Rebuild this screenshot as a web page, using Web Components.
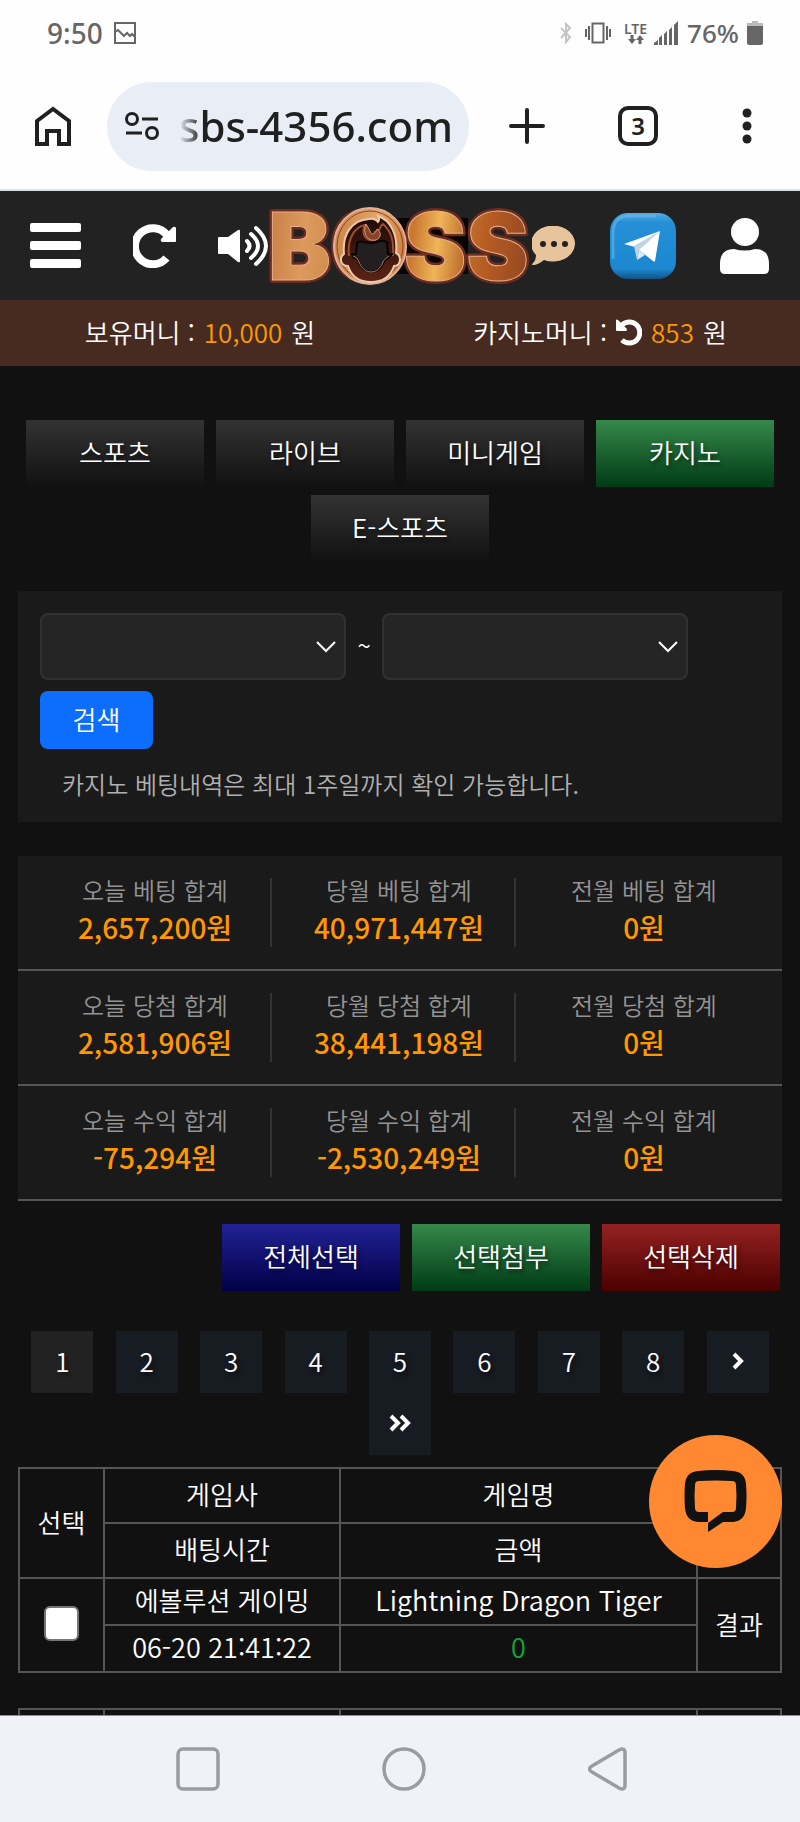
<!DOCTYPE html>
<html lang="ko">
<head>
<meta charset="utf-8">
<meta name="viewport" content="width=device-width, initial-scale=1">
<title>BOSS</title>
<style>
html,body{margin:0;height:100%}
body{background:#111;color:#fff;font-family:"Noto Sans CJK KR","Noto Sans",sans-serif;font-size:26px;line-height:36px;font-weight:350}
</style>
</head>
<body>
<phone-shell>
  <status-bar slot="top"></status-bar>
  <browser-bar slot="top"></browser-bar>
  <site-header></site-header>
  <money-bar></money-bar>
  <game-tabs>
    <action-button>스포츠</action-button>
    <action-button>라이브</action-button>
    <action-button>미니게임</action-button>
    <action-button tone="green">카지노</action-button>
    <action-button>E-스포츠</action-button>
  </game-tabs>
  <search-panel>카지노 베팅내역은 최대 1주일까지 확인 가능합니다.</search-panel>
  <bet-stats></bet-stats>
  <action-row>
    <action-button tone="blue">전체선택</action-button>
    <action-button tone="green">선택첨부</action-button>
    <action-button tone="red">선택삭제</action-button>
  </action-row>
  <page-list></page-list>
  <bet-table></bet-table>
  <bet-table blank></bet-table>
  <chat-fab slot="overlay"></chat-fab>
  <nav-bar slot="bottom"></nav-bar>
</phone-shell>
<script>
const define = (name, html) => customElements.define(name, class extends HTMLElement {
  constructor() {
    super();
    const t = document.createElement('template');
    t.innerHTML = '<style>:host,*{box-sizing:border-box}button{font:inherit;color:inherit;background:none;border:0;padding:0;margin:0;display:block;cursor:pointer}svg{display:block}</style>' +
      (typeof html === 'function' ? html(this) : html);
    this.attachShadow({mode: 'open'}).append(t.content.cloneNode(true));
  }
});

define('phone-shell', `
<style>
:host{display:flex;flex-direction:column;height:100vh;overflow:hidden}
.view{flex:1;min-height:0;position:relative}
main{height:100%;overflow-y:auto;scrollbar-width:none}
</style>
<slot name="top"></slot>
<div class="view"><main><slot></slot></main><slot name="overlay"></slot></div>
<slot name="bottom"></slot>`);

define('status-bar', `
<style>
:host{display:flex;align-items:center;justify-content:space-between;height:66px;padding:0 37px 0 47px;background:#fefefe;color:#666;font-family:"Noto Sans",sans-serif}
.g{display:flex;align-items:center}
.time{font-size:28px;font-weight:500;margin-right:11px}
.pct{font-size:26px;font-weight:500;margin:0 8px}
.lte{display:flex;flex-direction:column;align-items:center;font-size:14px;line-height:13px;font-weight:600;margin:0 7px 0 13px}
.bt{margin-right:13px}
</style>
<div class="g"><span class="time">9:50</span>
<svg width="22" height="22" viewBox="0 0 22 22" fill="none" stroke="#666" stroke-width="2"><path d="M1 1h20v20H1zM1 10l3-2 6 6 3-3 3 3 2-2 3 3"/></svg></div>
<div class="g">
<svg class="bt" width="12" height="22" viewBox="0 0 12 22" fill="none" stroke="#c4c4c4" stroke-width="2"><path d="M1 6l9 9-4 5V2l4 4-9 10"/></svg>
<svg width="26" height="22" viewBox="0 0 26 22" fill="none" stroke="#666" stroke-width="2"><path d="M7.500 1.500h11v19h-11zM4 4v14M1 7v8M22 4v14M25 7v8"/></svg>
<div class="lte">LTE<svg width="16" height="9" viewBox="0 0 16 9" fill="#666"><path d="M2.500 0h3v4h2.500L4 9 0 4h2.500zM10.500 9h3V5H16l-4-5-4 5h2.500z"/></svg></div>
<svg width="25" height="24" viewBox="0 0 25 24" fill="#666"><path d="M0 24v-2l4-3v5zM5 24v-7l3-3v10zM10 24V13l3-3v14zM15 24V9l3-3v18zM20 24V4l4-4v24z"/></svg>
<span class="pct">76%</span>
<svg width="16" height="24" viewBox="0 0 16 24"><path d="M5 0h6v2h5v5H0V2h5z" fill="#bbb"/><path d="M0 5h16v17q0 2-2 2H2q-2 0-2-2z" fill="#666"/></svg>
</div>`);

define('browser-bar', `
<style>
:host{display:flex;align-items:center;height:125px;padding:0 48px 3px 35px;background:#fefefe;border-bottom:2px solid #d9e2ea;color:#202020;font-family:"Noto Sans",sans-serif}
.url{flex:1;min-width:0;display:flex;align-items:center;gap:20px;height:89px;padding:0 12px 0 18px;margin:0 40px 0 36px;border-radius:45px;background:#e8edf6}
.url svg{flex:none}
input{flex:1;min-width:0;width:100%;border:0;padding:0;background:none;color:inherit;font:500 42px/56px "Noto Sans",sans-serif;outline:0;mask-image:linear-gradient(90deg,transparent,#000 22px)}
.tabs{width:40px;height:40px;border:4px solid #202020;border-radius:10px;font-size:24px;line-height:32px;font-weight:600;text-align:center;margin:0 84px 0 73px}
</style>
<button aria-label="home"><svg width="36" height="40" viewBox="0 0 36 40" fill="none" stroke="#202020" stroke-width="4"><path d="M2 15L18 3l16 12v23H24V25H12v13H2z"/></svg></button>
<div class="url">
<svg width="34" height="28" viewBox="0 0 34 28" fill="none" stroke="#202020" stroke-width="3"><circle cx="7" cy="7" r="5.500"/><circle cx="27" cy="21" r="5.500"/><path d="M17 7h16M1 21h16"/></svg>
<input aria-label="address" value="sbs-4356.com" readonly></div>
<button aria-label="new tab"><svg width="36" height="36" viewBox="0 0 36 36" stroke="#202020" stroke-width="4" stroke-linecap="round"><path d="M18 2v32M2 18h32"/></svg></button>
<button class="tabs">3</button>
<button aria-label="menu"><svg width="10" height="36" viewBox="0 0 10 36" fill="#202020"><circle cx="5" cy="5" r="4.500"/><circle cx="5" cy="18" r="4.500"/><circle cx="5" cy="31" r="4.500"/></svg></button>`);

define('boss-logo', `
<style>:host{display:block}svg{overflow:visible}text{font:900 94px "Inter",sans-serif}</style>
<svg width="260" height="80" viewBox="0 0 260 80" role="img" aria-label="BOSS">
<defs>
<linearGradient id="c" gradientUnits="userSpaceOnUse" x1="0" y1="0" x2="260" y2="30">
<stop offset="0" stop-color="#c67d45"/><stop offset=".15" stop-color="#dc9a5c"/><stop offset=".28" stop-color="#d08b4e"/><stop offset=".42" stop-color="#e2a668"/><stop offset=".56" stop-color="#c9762f"/><stop offset=".66" stop-color="#efb656"/><stop offset=".76" stop-color="#c0702f"/><stop offset=".86" stop-color="#b45a22"/><stop offset="1" stop-color="#974a22"/>
</linearGradient>
<linearGradient id="d" x1="0" y1="0" x2="0" y2="1"><stop offset="0" stop-color="#1c0906"/><stop offset="1" stop-color="#5c2416"/></linearGradient>
</defs>
<path d="M120 12h80v56h-80z" fill="#080505"/>
<text x="0" y="74" fill="url(#c)" stroke="#6d2c1c" stroke-width="6" stroke-linejoin="round" paint-order="stroke">BOSS</text>
<text x="0" y="74" fill="none" stroke="#e3ae8c" stroke-width="1" aria-hidden="true">BOSS</text>
<g transform="translate(2 0)">
<ellipse cx="100" cy="40" rx="36" ry="38" fill="url(#c)" stroke="#e0b09a" stroke-width="2"/>
<ellipse cx="100" cy="40" rx="33" ry="35" fill="none" stroke="#8c4526" stroke-width="1"/>
<path d="M74 48c-2-20 8-34 25-35 4-1 7 0 9 3 2-2 1-4 0-6 12 4 20 18 18 37 6 3 5 13-2 13-4 12-13 16-23 16s-19-4-23-16c-8 0-9-9-4-12z" fill="url(#d)" stroke="#efc7ab" stroke-width="2"/>
<path d="M79 50c-2-16 5-29 16-31-4 8 0 16 8 15 6-1 5-7 1-8 8-1 5-6 9-8 9 8 11 18 10 32" fill="none" stroke="#99502e" stroke-width="2"/>
<path d="M96 18c-4 10 2 18 10 16 5-2 6-8 1-11-2 6-6 6-7 2z" fill="#8a432a" stroke="#d29a78" stroke-width="1"/>
<path d="M87 37c4-4 7 0 14 0s10-5 16-1l1 12 4 0c-2 4-5 5-7 6-4 9-9 12-14 12s-10-3-13-12c-3-1-5-2-6-6h4z" fill="#211f1f" stroke="#090404" stroke-width="2"/>
<path d="M83 50c3 1 5 3 6 6 3 7 7 10 12 10s9-3 12-10c2-4 4-4 6-6" fill="none" stroke="#be8260" stroke-width="1"/>
</g>
</svg>`);

define('site-header', `
<style>
:host{display:flex;align-items:center;justify-content:space-between;height:109px;padding:0 31px 0 30px;background:#222}
.side{flex:1;display:flex;align-items:center;justify-content:space-between}
.pair{display:flex;align-items:center}
.l .pair{gap:42px}.r .pair{gap:33px}
.r{padding-left:4px}
</style>
<div class="side l"><button aria-label="menu"><svg width="51" height="45" viewBox="0 0 51 45" fill="#fff"><rect width="51" height="9" rx="2"/><rect y="18" width="51" height="9" rx="2"/><rect y="36" width="51" height="9" rx="2"/></svg></button>
<div class="pair"><button aria-label="refresh"><svg width="43" height="44" viewBox="0 0 43 44"><path d="M34 11A18 18 0 1 0 33.500 34" fill="none" stroke="#fff" stroke-width="8"/><path d="M43 4v13q0 1-1 1H29q-2-1-1-3L40 3q2-1 3 1z" fill="#fff"/></svg></button>
<button aria-label="sound"><svg width="50" height="42" viewBox="0 0 50 42" fill="none" stroke="#fff" stroke-width="4" stroke-linecap="round"><path d="M1 12h9L20 5q2-1 2 1v30q0 2-2 1L10 29H1q-1 0-1-1V13q0-1 1-1z" fill="#fff" stroke="none"/><path d="M29 16q5 5 0 10M33 9q14 12 0 24M38 3q20 18 0 36"/></svg></button></div></div>
<boss-logo></boss-logo>
<div class="side r"><div class="pair"><button aria-label="messages"><svg width="45" height="40" viewBox="0 0 45 40"><path d="M1 39q-2 0 0-2 3-3 3-8a22 18 0 1 1 8 5Q6 39 1 39z" fill="#e8c49c"/><g fill="#222"><circle cx="11" cy="18" r="3"/><circle cx="22" cy="18" r="3"/><circle cx="33" cy="18" r="3"/></g></svg></button>
<button aria-label="telegram"><svg width="66" height="66" viewBox="0 0 66 66"><defs><linearGradient id="t" x1="0" y1="0" x2="0" y2="1"><stop offset="0" stop-color="#54abe2"/><stop offset=".14" stop-color="#2590d6"/><stop offset=".85" stop-color="#1b87d0"/><stop offset="1" stop-color="#125384"/></linearGradient></defs><rect width="66" height="66" rx="18" fill="url(#t)"/><path d="M3 46V20Q3 3 20 3h26" fill="none" stroke="#74bdea" stroke-width="3" opacity=".5"/><path d="M14 31l36-13-23 21-2-5z" fill="#fff"/><path d="M24 33l26-15-21 19-2 10z" fill="#bed3e5"/><path d="M29 37l21-19-5 30q-1 1-2 0z" fill="#fff"/><path d="M27 47l2-10 6 5z" fill="#dce8f2"/></svg></button></div>
<button aria-label="account"><svg width="49" height="56" viewBox="0 0 49 56" fill="#fff"><circle cx="25" cy="14" r="14"/><path d="M0 51V46q0-15 14-15 11 3 21 0 14 0 14 15v5q0 5-5 5H5q-5 0-5-5z"/></svg></button></div>`);

define('money-bar', `
<style>
:host{display:grid;grid-template-columns:1fr 1fr;height:66px;padding-bottom:2px;background:#472b20}
div{display:flex;align-items:center;justify-content:center;gap:9px}
b{font-weight:inherit;color:#ff9800}
</style>
<div><span>보유머니 :</span><b>10,000</b><span>원</span></div>
<div><span>카지노머니 :</span><button aria-label="reload"><svg width="26" height="27" viewBox="0 0 26 27"><path d="M6 6A10.500 10.500 0 1 1 6 21" fill="none" stroke="#fff" stroke-width="5"/><path d="M0 1v10q0 1 1 1h9q2-1 0-3L2 1Q0 0 0 1z" fill="#fff"/></svg></button><b>853</b><span>원</span></div>`);

define('action-button', `
<style>
:host{display:block;width:178px;--a:#333;--b:#111}
:host([tone=green]){--a:#35884a;--b:#003b15}
:host([tone=blue]){--a:#222294;--b:#000048}
:host([tone=red]){--a:#942222;--b:#4c0000}
button{width:100%;height:67px;padding-bottom:4px;background:linear-gradient(var(--a),var(--b));text-align:center;text-shadow:2px 3px 4px #0008}
</style><button><slot></slot></button>`);

define('game-tabs', `<style>:host{display:flex;flex-wrap:wrap;justify-content:center;gap:8px 12px;padding:54px 18px 0}</style><slot></slot>`);
define('action-row', `<style>:host{display:flex;justify-content:flex-end;gap:12px;padding:23px 20px 0 18px}</style><slot></slot>`);

define('search-panel', `
<style>
:host{display:block;margin:29px 18px 0;padding:22px 22px 20px;background:#1a1a1a}
.row{display:flex;align-items:center}
.row span{width:36px;text-align:center;font-size:24px;margin-top:-4px}
select{appearance:none;width:306px;height:67px;border:2px solid #313131;border-radius:8px;color:#fff;font:inherit;
background:#252525 url('data:image/svg+xml,<svg xmlns="http://www.w3.org/2000/svg" width="20" height="12" fill="none" stroke="white" stroke-width="2"><path d="M1 1l9 9 9-9"/></svg>') no-repeat right 8px center}
button{width:113px;height:58px;margin-top:11px;padding-bottom:2px;border-radius:8px;background:#0d6efd}
p{margin:17px 0 0 22px;font-size:24px;line-height:36px;color:#b0b0b0}
</style>
<div class="row"><select aria-label="시작일"></select><span>~</span><select aria-label="종료일"></select></div>
<button>검색</button>
<p><slot></slot></p>`);

const stats = [['베팅', '2,657,200', '40,971,447', '0'], ['당첨', '2,581,906', '38,441,198', '0'], ['수익', '-75,294', '-2,530,249', '0']];
define('bet-stats', `
<style>
:host{display:block;margin:34px 18px 0;background:#1a1a1a}
.row{display:grid;grid-template-columns:repeat(3,1fr);gap:12px;padding:22px;border-bottom:2px solid #555}
dl{margin:0;height:69px;text-align:center;border-right:2px solid #333}
dl:last-child{border-right:0}
dt{font-size:24px;line-height:24px;color:#949494}
dd{margin:0;font-size:28px;line-height:50px;font-weight:500;color:#ff9800}
</style>` + stats.map(([k, ...v]) => '<div class="row">' + v.map((n, i) => `<dl><dt>${['오늘', '당월', '전월'][i]} ${k} 합계</dt><dd>${n}원</dd></dl>`).join('') + '</div>').join(''));

define('page-list', `
<style>
:host{display:block;padding:40px 20px 0}
nav{display:flex;flex-wrap:wrap;justify-content:center}
span{flex:0 0 11.11%;display:flex;justify-content:center}
a{width:62px;height:62px;display:flex;align-items:center;justify-content:center;padding-bottom:2px;background:#171b22;color:#fff;text-decoration:none;text-shadow:2px 3px 4px #0008}
a.on{background:#222}
</style><nav>` + [1, 2, 3, 4, 5, 6, 7, 8].map(n => `<span><a href="#"${n === 1 ? ' class="on"' : ''}>${n}</a></span>`).join('') +
`<span><a href="#" aria-label="next"><svg width="12" height="18" viewBox="0 0 12 18" fill="none" stroke="#fff" stroke-width="4"><path d="M2 2l7 7-7 7"/></svg></a></span>
<span><a href="#" aria-label="last"><svg width="22" height="18" viewBox="0 0 22 18" fill="none" stroke="#fff" stroke-width="4"><path d="M2 2l7 7-7 7M12 2l7 7-7 7"/></svg></a></span></nav>`);

define('bet-table', el => `
<style>
:host{display:block;margin:12px 18px 0}
:host([blank]){margin-top:35px}
table{width:100%;table-layout:fixed;border-collapse:collapse;text-align:center}
th,td{border:2px solid #555;padding:0 0 3px;font-weight:inherit}
tr{height:47px}tr.h{height:55px}
.a{width:85px}.b{width:236px}.c{width:84px}
.w{color:#10a838}
.n{font-size:27px}
label{display:flex;justify-content:center}
input{appearance:none;width:35px;height:35px;margin:0;border:2px solid #767676;border-radius:6px;background:#fff}
</style>
<table><colgroup><col class="a"><col class="b"><col><col class="c"></colgroup>` +
(el.hasAttribute('blank') ? '<tr class="h"><td></td><td></td><td></td><td></td></tr></table>' : `
<tr class="h"><th rowspan="2">선택</th><th>게임사</th><th>게임명</th><th rowspan="2"></th></tr>
<tr class="h"><th>배팅시간</th><th>금액</th></tr>
<tr><td rowspan="2"><label><input type="checkbox" aria-label="선택"></label></td><td>에볼루션 게이밍</td><td class="n">Lightning Dragon Tiger</td><td rowspan="2">결과</td></tr>
<tr><td class="n">06-20 21:41:22</td><td class="w n">0</td></tr></table>`));

define('chat-fab', `
<style>
:host{position:absolute;right:18px;bottom:147px}
button{width:133px;height:133px;border-radius:50%;background:#ff8830;display:grid;place-items:center}
</style>
<button aria-label="chat"><svg width="63" height="63" viewBox="0 0 63 63"><path fill="#111" d="M14 1q17-2 35 0 12 1 13 13 1 12 0 24-1 13-13 14H39L24 62V52H14Q2 51 1 38 0 26 1 14 2 2 14 1z"/><path fill="#ff8830" d="M15 11q16-1 33 0 4 0 4 4 1 11 0 23 0 4-4 4H39L24 53V42H15q-4 0-4-4-1-12 0-23 0-4 4-4z"/></svg></button>`);

define('nav-bar', `
<style>
:host{display:flex;align-items:center;justify-content:space-between;height:107px;padding:0 172px 0 176px;background:#eff3f8;border-top:1px solid #8d9092}
svg{fill:none;stroke:#999d9f;stroke-width:3.500}
</style>
<button aria-label="recent"><svg width="44" height="44" viewBox="0 0 44 44"><rect x="2" y="2" width="40" height="40" rx="5"/></svg></button>
<button aria-label="home"><svg width="44" height="44" viewBox="0 0 44 44"><circle cx="22" cy="22" r="20"/></svg></button>
<button aria-label="back"><svg width="40" height="44" viewBox="0 0 40 44"><path d="M31 3q6-3 6 3v32q0 6-6 3L4 25q-5-3 0-6z"/></svg></button>`);
</script>
</body>
</html>
